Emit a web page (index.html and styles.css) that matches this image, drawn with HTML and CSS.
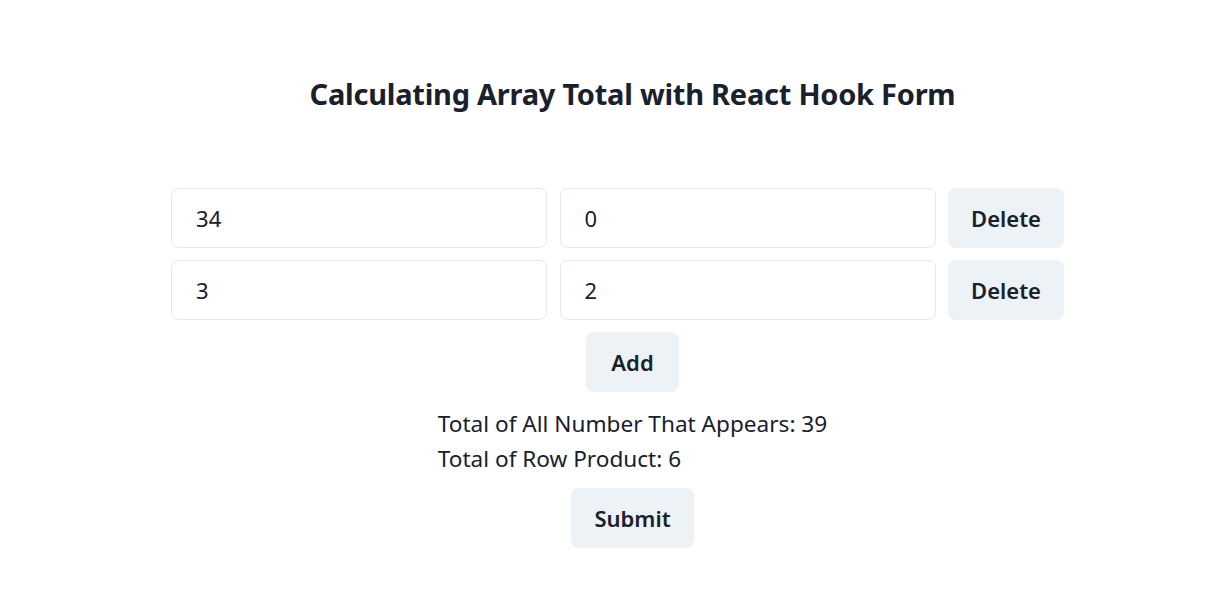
FILE: index.html
```html
<!DOCTYPE html>
<html lang="en">
<head>
<meta charset="utf-8">
<title>Calculating Array Total with React Hook Form</title>
<link rel="stylesheet" href="styles.css">
</head>
<body>
<main class="page">
  <h1 class="title">Calculating Array Total with React Hook Form</h1>
  <form class="form">
    <div class="rows">
      <div class="row">
        <input class="field" type="number" value="34">
        <input class="field" type="number" value="0">
        <button type="button" class="btn">Delete</button>
      </div>
      <div class="row">
        <input class="field" type="number" value="3">
        <input class="field" type="number" value="2">
        <button type="button" class="btn">Delete</button>
      </div>
    </div>
    <button type="button" class="btn btn-add">Add</button>
    <div class="totals">
      <p class="total">Total of All Number That Appears: 39</p>
      <p class="total">Total of Row Product: 6</p>
    </div>
    <button type="submit" class="btn">Submit</button>
  </form>
</main>
</body>
</html>
```

FILE: styles.css
```css
* { box-sizing: border-box; }
html, body { margin: 0; padding: 0; background: #fff; }
body {
  font-family: "Noto Sans", "Open Sans", sans-serif;
  color: #1A202C;
}
.page {
  display: flex;
  flex-direction: column;
  align-items: center;
  padding: 76px 0 0 49px;
}
.title {
  margin: 0;
  font-size: 29px;
  line-height: 36px;
  font-weight: 700;
  letter-spacing: -0.25px;
}
.form {
  margin-top: 76px;
  display: flex;
  flex-direction: column;
  align-items: center;
  gap: 12px;
}
.rows {
  display: flex;
  flex-direction: column;
  gap: 12px;
  padding-right: 30px;
}
.row {
  display: flex;
  gap: 12.5px;
  align-items: center;
}
.field {
  width: 376px;
  height: 60px;
  border: 1.25px solid #E2E8F0;
  border-radius: 7.5px;
  padding: 0 24px;
  font: inherit;
  font-size: 22px;
  color: #1A202C;
  background: #fff;
  outline: none;
  -moz-appearance: textfield;
}
.field::-webkit-outer-spin-button,
.field::-webkit-inner-spin-button { -webkit-appearance: none; margin: 0; }
.btn {
  height: 60px;
  padding: 0 23px;
  border: none;
  border-radius: 7.5px;
  background: #EDF2F7;
  color: #1A202C;
  font-family: inherit;
  font-size: 22px;
  font-weight: 600;
  cursor: pointer;
}
.btn-add { padding: 0 25px; }
.totals {
  display: flex;
  flex-direction: column;
  padding-top: 2px;
}
.total {
  margin: 0;
  font-size: 22.6px;
  line-height: 35px;
}
```
